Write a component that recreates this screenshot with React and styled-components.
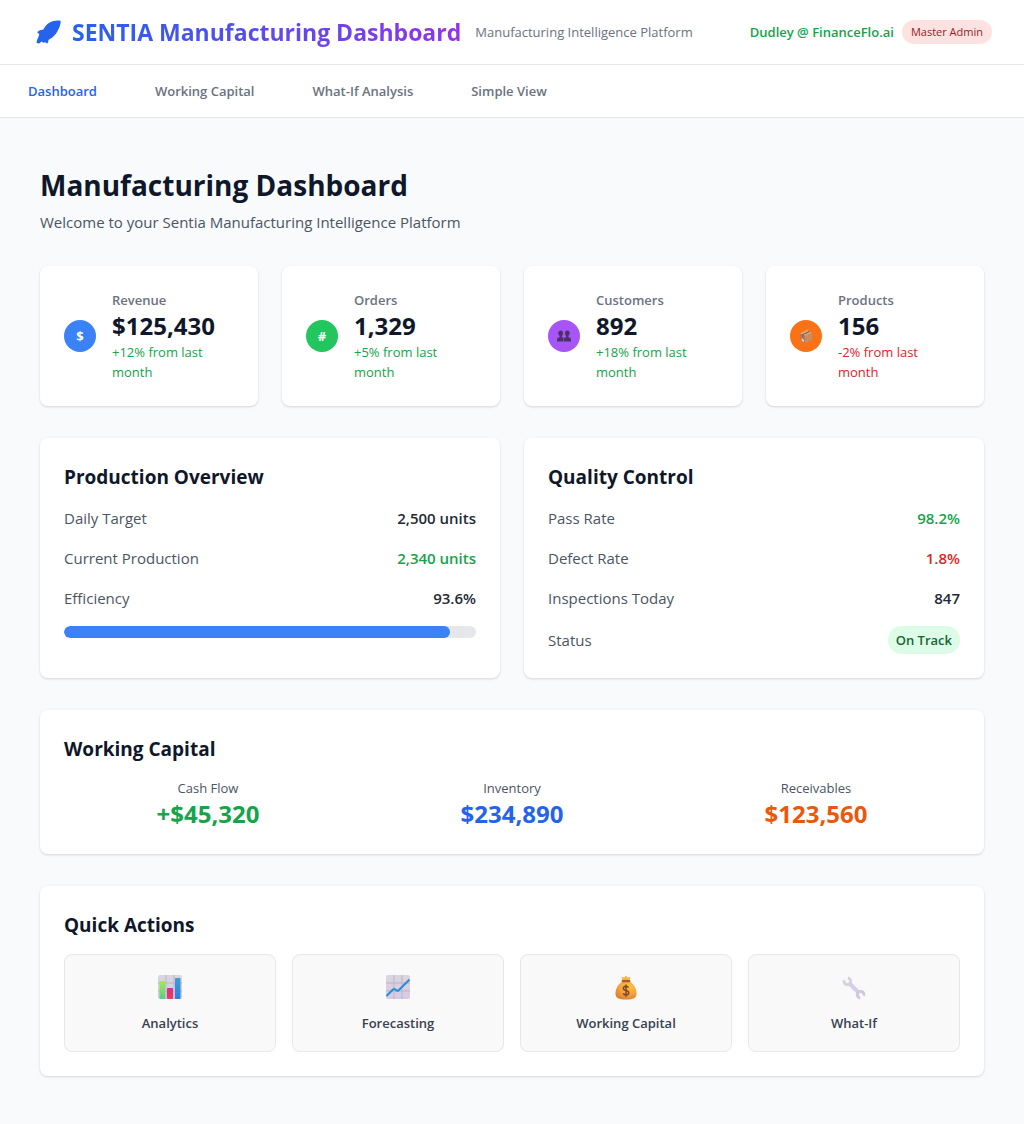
import React from "react";
import styled, { createGlobalStyle } from "styled-components";

const GlobalStyle = createGlobalStyle`
  *, *::before, *::after { box-sizing: border-box; }
  body {
    margin: 0;
    background: #f8fafc;
    color: #1f2937;
    font-family: "Segoe UI", "Open Sans", "Noto Sans", sans-serif;
    font-size: 15px;
    line-height: 24px;
  }
  h1, h2, p, dl, dt, dd, ul { margin: 0; padding: 0; }
`;

const Header = styled.header`
  display: flex;
  align-items: center;
  justify-content: space-between;
  gap: 16px;
  min-height: 65px;
  padding: 0 32px;
  background: #fff;
  border-bottom: 1px solid #e5e7eb;
`;

const Brand = styled.div`
  display: flex;
  align-items: center;
  gap: 14px;
`;

const Logo = styled.div`
  display: flex;
  align-items: center;
  gap: 10px;
  padding-left: 4px;
  white-space: nowrap;
`;

const LogoText = styled.span`
  font-size: 23px;
  font-weight: 700;
  line-height: 36px;
  color: transparent;
  background: linear-gradient(90deg, #2563eb, #9333ea);
  background-clip: text;
  -webkit-background-clip: text;
`;

const Tagline = styled.span`
  font-size: 13px;
  line-height: 20px;
  color: #6b7280;
  white-space: nowrap;
`;

const User = styled.div`
  display: flex;
  align-items: center;
  gap: 8px;
  font-size: 13px;
  font-weight: 600;
  color: #16a34a;
  white-space: nowrap;
`;

const Role = styled.span`
  padding: 4px 9px;
  border-radius: 12px;
  background: #fee2e2;
  color: #991b1b;
  font-size: 11px;
  font-weight: 400;
  line-height: 16px;
`;

const Nav = styled.nav`
  display: flex;
  gap: 58px;
  padding: 16px 28px;
  background: #fff;
  border-bottom: 1px solid #e5e7eb;
`;

const NavLink = styled.a`
  font-size: 13px;
  font-weight: 600;
  line-height: 20px;
  color: ${(p) => (p.$active ? "#2563eb" : "#6b7280")};
  text-decoration: none;
`;

const Main = styled.main`
  display: flex;
  flex-direction: column;
  gap: 32px;
  padding: 48px 40px;
`;

const PageTitle = styled.h1`
  margin-bottom: 6px;
  font-size: 28px;
  font-weight: 700;
  line-height: 38px;
  color: #0f172a;
`;

const Intro = styled.p`
  color: #4b5563;
`;

const Grid = styled.div`
  display: grid;
  grid-template-columns: repeat(${(p) => p.$columns}, minmax(0, 1fr));
  gap: ${(p) => p.$gap}px;
`;

const Card = styled.section`
  padding: 24px;
  border-radius: 8px;
  background: #fff;
  box-shadow: 0 1px 3px rgba(0, 0, 0, 0.1), 0 1px 2px rgba(0, 0, 0, 0.06);
`;

const StatCard = styled(Card)`
  display: flex;
  align-items: center;
  gap: 16px;
`;

const StatIcon = styled.span`
  display: flex;
  flex: none;
  align-items: center;
  justify-content: center;
  width: 32px;
  height: 32px;
  border-radius: 50%;
  background: ${(p) => p.$color};
  color: #fff;
  font-size: 13px;
  font-weight: 700;
`;

const Label = styled.p`
  font-size: 13px;
  font-weight: ${(p) => (p.$strong ? 600 : 400)};
  line-height: 20px;
  color: ${(p) => (p.$strong ? "#6b7280" : "#4b5563")};
`;

const Value = styled.p`
  font-size: 24px;
  font-weight: 700;
  line-height: 32px;
  color: ${(p) => p.$color || "#0f172a"};
`;

const Change = styled.p`
  font-size: 13px;
  line-height: 20px;
  color: ${(p) => (p.$down ? "#dc2626" : "#16a34a")};
`;

const CardTitle = styled.h2`
  margin-bottom: 14px;
  font-size: 19px;
  font-weight: 700;
  line-height: 30px;
  color: #0f172a;
`;

const Rows = styled.dl`
  display: flex;
  flex-direction: column;
  gap: 16px;
`;

const Row = styled.div`
  display: flex;
  align-items: center;
  justify-content: space-between;
`;

const RowName = styled.dt`
  color: #4b5563;
`;

const RowValue = styled.dd`
  font-weight: 600;
  color: ${(p) => p.$color || "#1f2937"};
`;

const Status = styled.dd`
  padding: 4px 8px;
  border-radius: 14px;
  background: #dcfce7;
  color: #166534;
  font-size: 13px;
  font-weight: 600;
  line-height: 20px;
`;

const Track = styled.div`
  height: 12px;
  margin-top: 16px;
  border-radius: 6px;
  background: #e5e7eb;
  overflow: hidden;
`;

const Fill = styled.div`
  height: 100%;
  border-radius: 6px;
  background: #3b82f6;
`;

const Figure = styled.div`
  text-align: center;
`;

const Action = styled.button`
  display: flex;
  flex-direction: column;
  align-items: center;
  gap: 8px;
  padding: 16px;
  border: 1px solid #e5e7eb;
  border-radius: 8px;
  background: #f9f9f9;
  color: #374151;
  font-family: inherit;
  font-size: 13px;
  font-weight: 600;
  line-height: 24px;
  cursor: pointer;
`;

const Glyph = styled.svg`
  display: block;
  flex: none;
`;

const Rocket = () => (
  <Glyph width="26" height="24" viewBox="0 0 26 24" fill="#2563eb" aria-hidden="true">
    <path d="M24.600.7C20.500.2 16.500 1 13.300 2.700 10.600 4.200 8.800 6.800 7.400 9.400L4 10.300C2.800 10.800 1.700 11.600 1.200 12.300L3.300 14.300 2.200 17.500C1.200 19 .7 20.800.6 23.100L3.100 23.400 5.700 21.600 7.500 22.700 9 22.200 11.300 23.500C12.200 22.600 12.500 21.300 12.400 20L16.300 17.500C18.500 15.700 20.300 13.300 21.700 10.700 23.500 7.500 24.900 4 24.600.7Z" />
  </Glyph>
);

const People = () => (
  <Glyph width="14" height="12" viewBox="0 0 14 12" aria-hidden="true">
    <g fill="#4b3266">
      <path d="M3.700.5C5.300.5 6.100 1.700 6 3.200 5.900 4.500 5.500 5.500 4.800 6V7L6.500 7.800V11.500H0V9.200C.1 8 1.200 7.700 2.600 7V6C1.800 5.400 1.300 4.300 1.300 3.100 1.300 1.600 2.200.5 3.700.5Z" />
      <path d="M10.300.5C8.700.5 7.900 1.700 8 3.200 8.100 4.500 8.500 5.500 9.200 6V7L7 7.900V11.500H14V9.200C13.900 8 12.800 7.700 11.400 7V6C12.200 5.400 12.700 4.300 12.700 3.100 12.700 1.600 11.800.5 10.300.5Z" />
    </g>
  </Glyph>
);

const Package = () => (
  <Glyph width="14" height="15" viewBox="0 0 14 15" aria-hidden="true">
    <path d="M1 4.300 8.300.8 13 3.700V11L6 14.200 1 11Z" fill="#bd7950" />
    <path d="M1 4.300 8.300.8 13 3.700 6 7Z" fill="#dda77c" />
    <path d="M6 7 13 3.700V11L6 14.200Z" fill="#c98c61" />
    <path d="M3 5.400 10 2 11.200 2.700 4.300 6.100V8.200L3 7.400Z" fill="#8d563e" />
    <path d="M2.700 9.600 4.900 11V13L2.700 11.600Z" fill="#e3dced" />
  </Glyph>
);

const ChartPaper = () => (
  <>
    <rect x="4" y="4" width="24" height="24" rx="2" fill="url(#paper)" />
    <path d="M12 4V28M20 4V28M4 12H28M4 20H28" stroke="#b7a9c5" strokeWidth="1" opacity=".8" />
  </>
);

const BarChart = () => (
  <Glyph width="32" height="32" viewBox="0 0 32 32" aria-hidden="true">
    <defs>
      <linearGradient id="paper" x1="0" y1="0" x2="0" y2="1">
        <stop stopColor="#d9d7de" /><stop offset="1" stopColor="#d8c9e5" />
      </linearGradient>
      <linearGradient id="lime" x1="0" y1="0" x2="0" y2="1">
        <stop stopColor="#a5e84b" /><stop offset="1" stopColor="#55cf88" />
      </linearGradient>
      <linearGradient id="pink" x1="0" y1="0" x2="0" y2="1">
        <stop stopColor="#d82d8f" /><stop offset="1" stopColor="#f03a5b" />
      </linearGradient>
      <linearGradient id="azure" x1="0" y1="0" x2="0" y2="1">
        <stop stopColor="#3b9fd5" /><stop offset="1" stopColor="#2782e5" />
      </linearGradient>
    </defs>
    <ChartPaper />
    <rect x="5.500" y="10" width="5.500" height="18" rx=".7" fill="url(#lime)" />
    <rect x="13" y="17" width="6" height="11" rx=".7" fill="url(#pink)" />
    <rect x="21" y="7" width="5.500" height="21" rx=".7" fill="url(#azure)" />
  </Glyph>
);

const LineChart = () => (
  <Glyph width="32" height="32" viewBox="0 0 32 32" aria-hidden="true">
    <ChartPaper />
    <path d="M4.500 25 11 18.500C11.800 17.700 12.500 17.800 13.300 18.500L14.500 19.400C15.300 20 16 19.900 16.700 19.200L27.500 8.500" fill="none" stroke="#278fd9" strokeWidth="2" />
  </Glyph>
);

const MoneyBag = () => (
  <Glyph width="32" height="32" viewBox="0 0 32 32" aria-hidden="true">
    <defs>
      <radialGradient id="gold" cx=".65" cy=".25" r=".8">
        <stop stopColor="#ffc13d" /><stop offset=".6" stopColor="#f4a13a" /><stop offset="1" stopColor="#d98232" />
      </radialGradient>
    </defs>
    <path d="M12.500 10.500H19.500C24 13 26.500 18 26.500 22.500 26.500 27 23.500 28.500 16 28.500S5.500 27 5.500 22.500C5.500 18 8 13 12.500 10.500Z" fill="url(#gold)" />
    <path d="M12.500 9.500 11.500 5.800 14.200 6.800 16 4.500 17.800 6.800 20.500 5.800 19.500 9.500Z" fill="#fbb03b" />
    <rect x="11.500" y="9" width="9" height="2.200" rx="1.100" fill="#a85b38" />
    <path d="M18.600 16.700C18 15.700 17 15.300 16 15.300 14.500 15.300 13.400 16.200 13.400 17.500 13.400 20.400 18.700 18.700 18.700 21.700 18.700 23.100 17.500 24 16 24 14.700 24 13.700 23.500 13.200 22.400M16 13.500V25.800" fill="none" stroke="#7d4533" strokeWidth="1.500" />
  </Glyph>
);

const Wrench = () => (
  <Glyph width="32" height="32" viewBox="0 0 32 32" fill="none" aria-hidden="true">
    <path d="M11.500 12.500 20.500 21.500" stroke="#d9cdec" strokeWidth="4" />
    <path d="M6.200 9.300A3.300 3.300 0 1 0 9.800 7" stroke="#d5d2dc" strokeWidth="3" />
    <path d="M25.800 24.700A3.300 3.300 0 1 0 22.200 27" stroke="#d2c8dc" strokeWidth="3" />
  </Glyph>
);

const NAV = ["Dashboard", "Working Capital", "What-If Analysis", "Simple View"];

const STATS = [
  { name: "Revenue", value: "$125,430", change: "+12% from last month", color: "#3b82f6", icon: "$" },
  { name: "Orders", value: "1,329", change: "+5% from last month", color: "#22c55e", icon: "#" },
  { name: "Customers", value: "892", change: "+18% from last month", color: "#a855f7", icon: <People /> },
  { name: "Products", value: "156", change: "-2% from last month", down: true, color: "#f97316", icon: <Package /> },
];

const PRODUCTION = [
  { name: "Daily Target", value: "2,500 units" },
  { name: "Current Production", value: "2,340 units", color: "#16a34a" },
  { name: "Efficiency", value: "93.6%" },
];

const QUALITY = [
  { name: "Pass Rate", value: "98.2%", color: "#16a34a" },
  { name: "Defect Rate", value: "1.8%", color: "#dc2626" },
  { name: "Inspections Today", value: "847" },
];

const CAPITAL = [
  { name: "Cash Flow", value: "+$45,320", color: "#16a34a" },
  { name: "Inventory", value: "$234,890", color: "#2563eb" },
  { name: "Receivables", value: "$123,560", color: "#ea580c" },
];

const ACTIONS = [
  { name: "Analytics", icon: <BarChart /> },
  { name: "Forecasting", icon: <LineChart /> },
  { name: "Working Capital", icon: <MoneyBag /> },
  { name: "What-If", icon: <Wrench /> },
];

const EFFICIENCY = 93.6;

const DataRows = ({ items, children }) => (
  <Rows>
    {items.map((item) => (
      <Row key={item.name}>
        <RowName>{item.name}</RowName>
        <RowValue $color={item.color}>{item.value}</RowValue>
      </Row>
    ))}
    {children}
  </Rows>
);

export default function App() {
  return (
    <>
      <GlobalStyle />
      <Header>
        <Brand>
          <Logo>
            <Rocket />
            <LogoText>SENTIA Manufacturing Dashboard</LogoText>
          </Logo>
          <Tagline>Manufacturing Intelligence Platform</Tagline>
        </Brand>
        <User>
          Dudley @ FinanceFlo.ai
          <Role>Master Admin</Role>
        </User>
      </Header>
      <Nav>
        {NAV.map((name, i) => (
          <NavLink key={name} href="#" $active={i === 0} aria-current={i === 0 ? "page" : undefined}>
            {name}
          </NavLink>
        ))}
      </Nav>
      <Main>
        <div>
          <PageTitle>Manufacturing Dashboard</PageTitle>
          <Intro>Welcome to your Sentia Manufacturing Intelligence Platform</Intro>
        </div>
        <Grid $columns={4} $gap={24}>
          {STATS.map((s) => (
            <StatCard key={s.name}>
              <StatIcon $color={s.color}>{s.icon}</StatIcon>
              <div>
                <Label $strong>{s.name}</Label>
                <Value>{s.value}</Value>
                <Change $down={s.down}>{s.change}</Change>
              </div>
            </StatCard>
          ))}
        </Grid>
        <Grid $columns={2} $gap={24}>
          <Card>
            <CardTitle>Production Overview</CardTitle>
            <DataRows items={PRODUCTION} />
            <Track role="progressbar" aria-label="Efficiency" aria-valuenow={EFFICIENCY} aria-valuemin={0} aria-valuemax={100}>
              <Fill style={{ width: `${EFFICIENCY}%` }} />
            </Track>
          </Card>
          <Card>
            <CardTitle>Quality Control</CardTitle>
            <DataRows items={QUALITY}>
              <Row>
                <RowName>Status</RowName>
                <Status>On Track</Status>
              </Row>
            </DataRows>
          </Card>
        </Grid>
        <Card>
          <CardTitle>Working Capital</CardTitle>
          <Grid $columns={3} $gap={16}>
            {CAPITAL.map((c) => (
              <Figure key={c.name}>
                <Label>{c.name}</Label>
                <Value $color={c.color}>{c.value}</Value>
              </Figure>
            ))}
          </Grid>
        </Card>
        <Card>
          <CardTitle>Quick Actions</CardTitle>
          <Grid $columns={4} $gap={16}>
            {ACTIONS.map((a) => (
              <Action key={a.name} type="button">
                {a.icon}
                {a.name}
              </Action>
            ))}
          </Grid>
        </Card>
      </Main>
    </>
  );
}
